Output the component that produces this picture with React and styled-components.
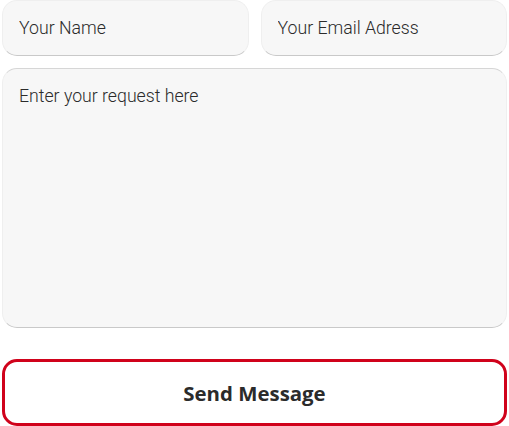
import React from 'react';
import styled, { createGlobalStyle } from 'styled-components';

const GlobalStyle = createGlobalStyle`
  html, body {
    margin: 0;
    padding: 0;
    background: #ffffff;
  }
  * {
    box-sizing: border-box;
  }
`;

const Form = styled.form`
  width: 509px;
  padding: 0 2px;
  display: flex;
  flex-direction: column;
`;

const Row = styled.div`
  display: grid;
  grid-template-columns: 1fr 1fr;
  gap: 12px;
`;

const fieldStyles = `
  width: 100%;
  background: #f7f7f7;
  border: 1px solid #efefef;
  border-bottom-color: #c9c9c9;
  border-radius: 15px;
  font-family: Roboto, "Liberation Sans", sans-serif;
  font-weight: 300;
  font-size: 17.7px;
  color: #2b2b2b;
  outline: none;
  &::placeholder {
    color: #2b2b2b;
    opacity: 1;
  }
`;

const Input = styled.input`
  ${fieldStyles}
  height: 56px;
  padding: 0 16px;
`;

const TextArea = styled.textarea`
  ${fieldStyles}
  height: 260px;
  margin-top: 12px;
  padding: 17px 16px;
  border-top-color: #d6d6d6;
  resize: none;
`;

const SendButton = styled.button`
  margin-top: 31px;
  height: 67px;
  width: 100%;
  background: #ffffff;
  border: 3px solid #d0021b;
  border-radius: 15px;
  font-family: "Open Sans", "Noto Sans", sans-serif;
  font-weight: 700;
  font-size: 20.4px;
  color: #2b2b2b;
  cursor: pointer;
`;

export default function App() {
  return (
    <>
      <GlobalStyle />
      <Form onSubmit={e => e.preventDefault()}>
        <Row>
          <Input type="text" placeholder="Your Name" />
          <Input type="email" placeholder="Your Email Adress" />
        </Row>
        <TextArea placeholder="Enter your request here" />
        <SendButton type="submit">Send Message</SendButton>
      </Form>
    </>
  );
}
